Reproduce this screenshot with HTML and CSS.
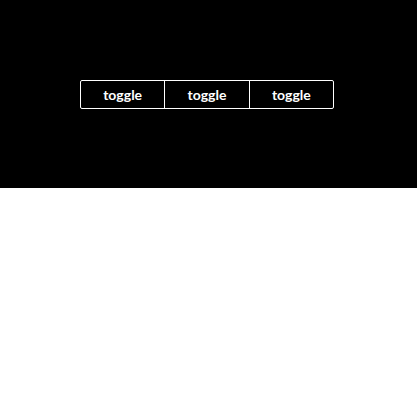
FILE: index.html
```html
<!DOCTYPE html>
<html>
<head>
<meta charset="utf-8">
<link rel="stylesheet" href="styles.css">
</head>
<body>
<section class="stage">
  <div class="group">
    <button class="btn">toggle</button>
    <button class="btn">toggle</button>
    <button class="btn">toggle</button>
  </div>
</section>
</body>
</html>
```
FILE: styles.css
```css
html, body {
  margin: 0;
  padding: 0;
  background: #fff;
}
.stage {
  background: #000;
  height: 188px;
  padding: 80px 0 0 80px;
  box-sizing: border-box;
}
.group {
  display: flex;
  width: 254px;
  height: 29px;
  box-sizing: border-box;
  border: 1px solid #fff;
  border-radius: 2px;
}
.btn {
  flex: 1;
  background: transparent;
  border: 0;
  margin: 0;
  padding: 0;
  color: #fff;
  font-family: Lato, "Liberation Sans", sans-serif;
  font-weight: 700;
  font-size: 14px;
  line-height: 28px;
}
.btn + .btn {
  border-left: 1px solid #fff;
}
```
